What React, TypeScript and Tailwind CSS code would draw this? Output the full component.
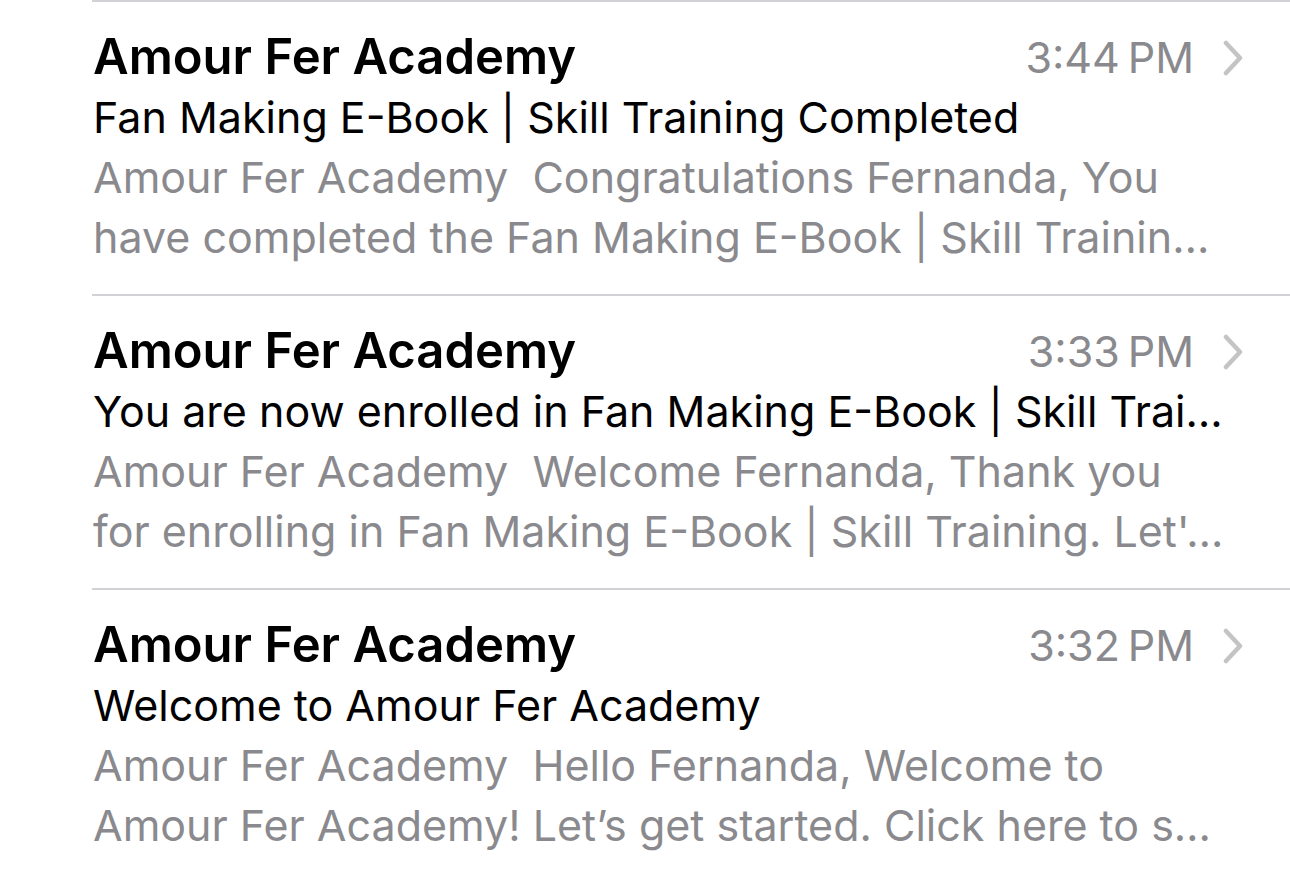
const mails = [
  {
    sender: 'Amour Fer Academy',
    time: '3:44\u202FPM',
    subject: 'Fan Making E-Book | Skill Training Completed',
    preview: ['Amour Fer Academy\u00a0 Congratulations Fernanda, You', 'have completed the Fan Making E-Book | Skill Trainin…'],
  },
  {
    sender: 'Amour Fer Academy',
    time: '3:33\u202FPM',
    subject: 'You are now enrolled in Fan Making E-Book | Skill Trai…',
    preview: ['Amour Fer Academy\u00a0 Welcome Fernanda, Thank you', "for enrolling in Fan Making E-Book | Skill Training. Let'…"],
  },
  {
    sender: 'Amour Fer Academy',
    time: '3:32\u202FPM',
    subject: 'Welcome to Amour Fer Academy',
    preview: ['Amour Fer Academy\u00a0 Hello Fernanda, Welcome to', 'Amour Fer Academy! Let’s get started. Click here to s…'],
  },
]

function Chevron() {
  return (
    <svg width="22" height="36" viewBox="0 0 22 36" fill="none" className="shrink-0 mt-[2px]">
      <path d="M4 3 L18 18 L4 33" stroke="#c4c4c7" strokeWidth="4.5" strokeLinecap="round" strokeLinejoin="round" />
    </svg>
  )
}

export default function App() {
  return (
    <div className="w-[1290px] h-[873px] overflow-hidden bg-white font-['Inter','Noto_Sans',sans-serif]">
      {mails.map((m, i) => (
        <div key={i} className="ml-[92px] border-t-2 border-[#d1d1d6] h-[294px]">
          <div className="pl-[1px] pt-[25px] pr-[46px]">
            <div className="flex items-center h-[60px]">
              <span className="flex-1 text-[49px] font-semibold text-black leading-[60px]">{m.sender}</span>
              <span className="text-[43px] text-[#8a8a8e] leading-[60px] mr-[28px]">{m.time}</span>
              <Chevron />
            </div>
            <div className="text-[43px] text-black leading-[60px] whitespace-nowrap overflow-hidden">{m.subject}</div>
            {m.preview.map((p, j) => (
              <div key={j} className="text-[43px] text-[#8a8a8e] leading-[60px] whitespace-nowrap overflow-hidden">{p}</div>
            ))}
          </div>
        </div>
      ))}
    </div>
  )
}
